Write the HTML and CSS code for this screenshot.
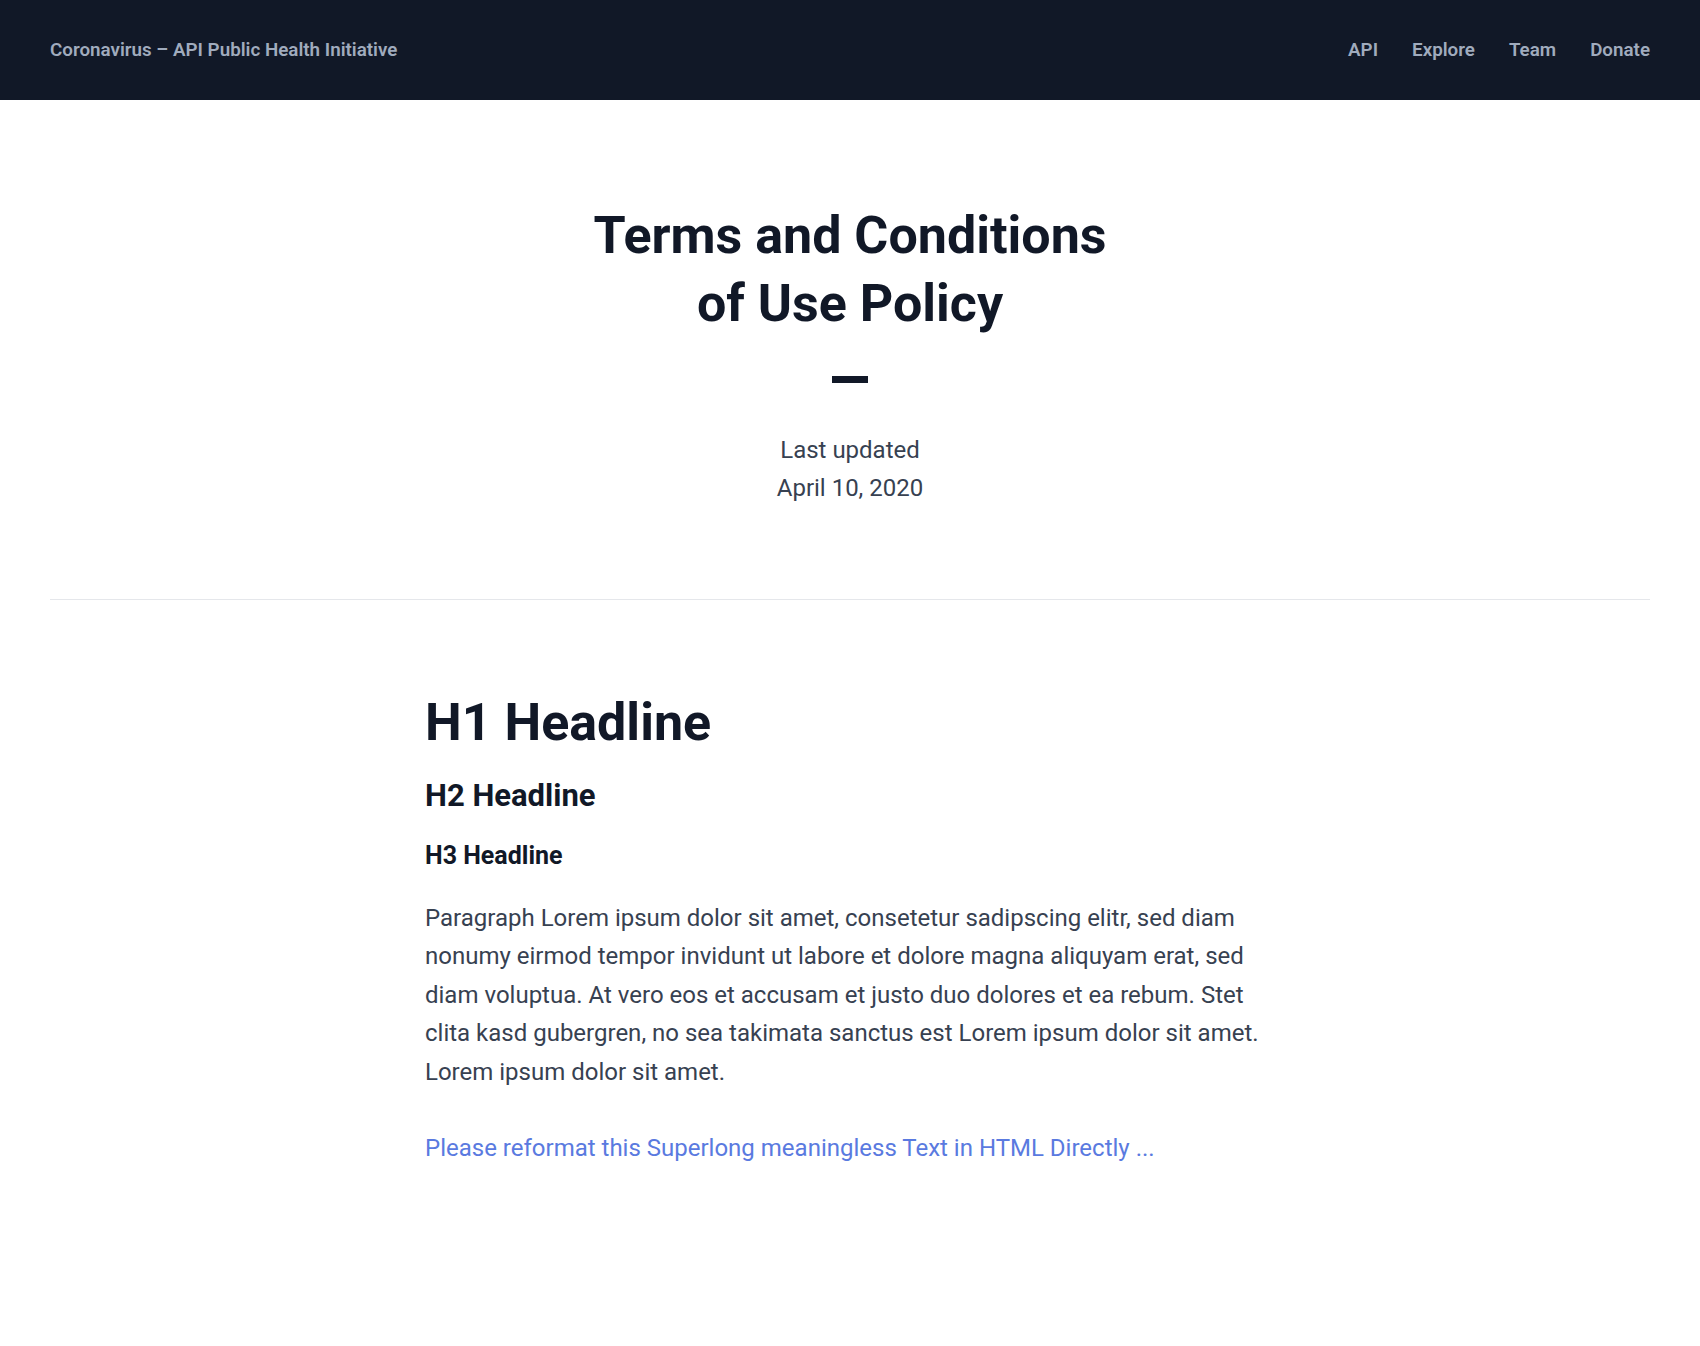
FILE: index.html
```html
<!DOCTYPE html>
<html lang="en">
<head>
<meta charset="utf-8">
<title>Terms and Conditions of Use Policy</title>
<link rel="stylesheet" href="styles.css">
</head>
<body>
<header class="topbar">
  <a class="brand" href="#">Coronavirus – API Public Health Initiative</a>
  <nav class="menu">
    <a href="#">API</a>
    <a href="#">Explore</a>
    <a href="#">Team</a>
    <a href="#">Donate</a>
  </nav>
</header>
<main>
  <section class="hero">
    <h1 class="hero-title">Terms and Conditions<br>of Use Policy</h1>
    <span class="dash"></span>
    <p class="updated">Last updated<br>April 10, 2020</p>
  </section>
  <hr class="divider">
  <article class="content">
    <h1>H1 Headline</h1>
    <h2>H2 Headline</h2>
    <h3>H3 Headline</h3>
    <p>Paragraph Lorem ipsum dolor sit amet, consetetur sadipscing elitr, sed diam nonumy eirmod tempor invidunt ut labore et dolore magna aliquyam erat, sed diam voluptua. At vero eos et accusam et justo duo dolores et ea rebum. Stet clita kasd gubergren, no sea takimata sanctus est Lorem ipsum dolor sit amet. Lorem ipsum dolor sit amet.</p>
    <p class="more"><a class="link" href="#">Please reformat this Superlong meaningless Text in HTML Directly ...</a></p>
  </article>
</main>
</body>
</html>
```

FILE: styles.css
```css
* { box-sizing: border-box; }
html, body { margin: 0; padding: 0; }
body {
  font-family: Roboto, "Noto Sans", "Liberation Sans", sans-serif;
  color: #111827;
  background: #fff;
}
a { text-decoration: none; }

.topbar {
  height: 100px;
  background: #111827;
  display: flex;
  align-items: center;
  justify-content: space-between;
  padding: 0 50px;
}
.brand, .menu a {
  color: #a0abbd;
  font-size: 18.8px;
  font-weight: 600;
}
.menu { display: flex; gap: 34px; }

.hero {
  padding-top: 102px;
  text-align: center;
  display: flex;
  flex-direction: column;
  align-items: center;
}
.hero-title {
  margin: 0;
  font-size: 52px;
  line-height: 68px;
  font-weight: 700;
  color: #111827;
}
.dash {
  display: block;
  width: 36px;
  height: 7px;
  background: #111827;
  margin-top: 38px;
}
.updated {
  margin: 48px 0 0;
  font-size: 24px;
  line-height: 38px;
  color: #374151;
}
.divider {
  margin: 92px 50px 0;
  border: 0;
  border-top: 1px solid #e5e7eb;
}

.content {
  max-width: 850px;
  margin: 0 auto;
  padding-top: 88px;
  color: #374151;
}
.content h1 {
  margin: 0;
  font-size: 52px;
  line-height: 70px;
  font-weight: 700;
  color: #111827;
}
.content h2 {
  margin: 16px 0 0;
  font-size: 31px;
  line-height: 44px;
  font-weight: 700;
  color: #111827;
}
.content h3 {
  margin: 20px 0 0;
  font-size: 25px;
  line-height: 36px;
  font-weight: 700;
  color: #111827;
}
.content p {
  margin: 25px 0 0;
  font-size: 24px;
  line-height: 38.4px;
}
.content .more { margin-top: 38px; }
.link { color: #5a7ae0; }
```
